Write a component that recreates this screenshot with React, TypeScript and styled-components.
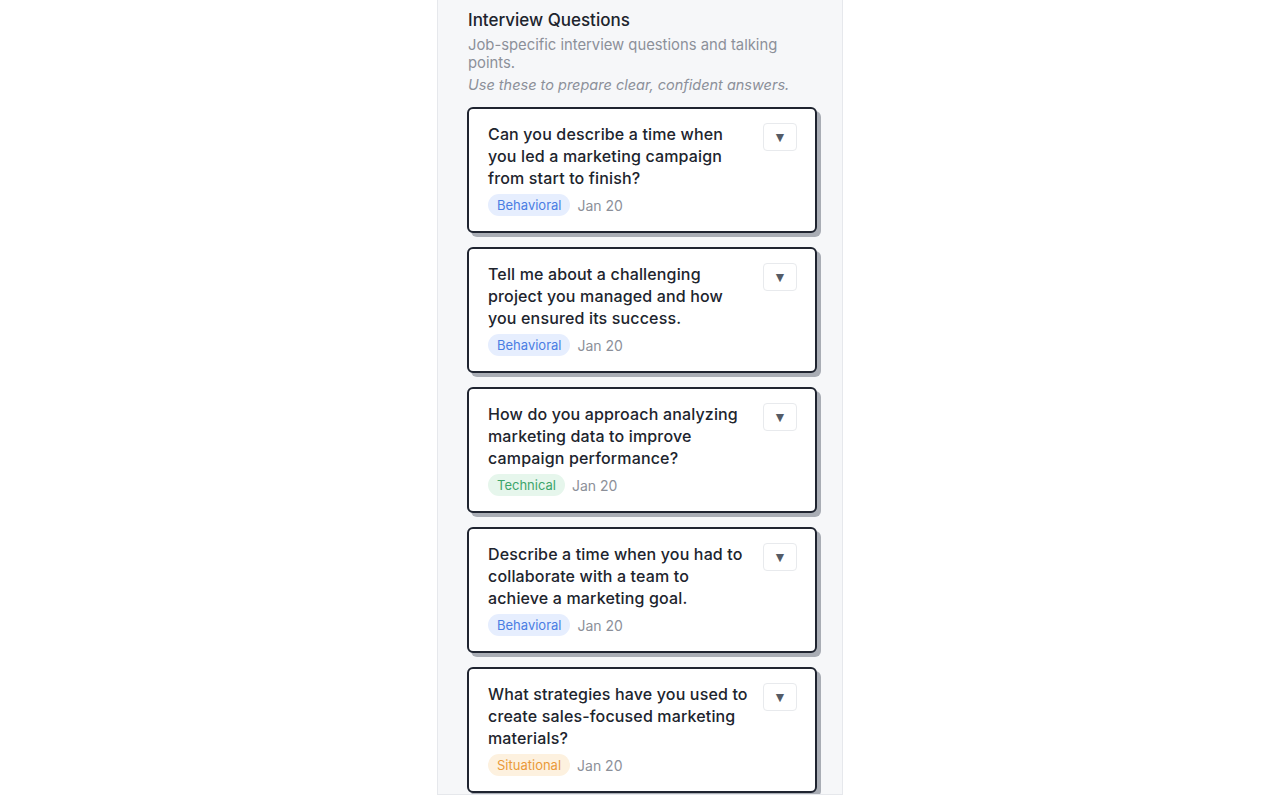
import React, { useState } from "react";
import styled, { createGlobalStyle, css } from "styled-components";

const GlobalStyle = createGlobalStyle`
  html, body {
    margin: 0;
    padding: 0;
    background: #ffffff;
  }
  body {
    font-family: Inter, "Noto Sans", sans-serif;
  }
`;

const Page = styled.div`
  display: flex;
  justify-content: center;
  height: 800px;
  overflow: hidden;
`;

const Panel = styled.section`
  width: 406px;
  height: 795px;
  box-sizing: border-box;
  background: #f6f7f9;
  border-left: 1px solid #e6e8ec;
  border-right: 1px solid #e6e8ec;
  border-bottom: 1px solid #e6e8ec;
  padding: 8px 25px 0 29px;
  overflow: hidden;
`;

const Title = styled.h2`
  margin: 0;
  padding-left: 1px;
  font-size: 17px;
  line-height: 24px;
  font-weight: 500;
  color: #20242d;
`;

const Subtitle = styled.p`
  margin: 4px 0 0;
  padding-left: 1px;
  font-size: 14.8px;
  line-height: 18px;
  color: #8c9099;
`;

const Hint = styled.p`
  margin: 4px 0 0;
  padding-left: 1px;
  font-size: 14.5px;
  line-height: 18px;
  font-style: italic;
  color: #8c9099;
`;

const List = styled.div`
  display: flex;
  flex-direction: column;
  gap: 14px;
  margin-top: 13px;
`;

const Card = styled.article`
  width: 350px;
  box-sizing: border-box;
  background: #ffffff;
  border: 2px solid #1f2430;
  border-radius: 6px;
  box-shadow: 4px 4px 0 #a9adb5;
  padding: 14px 18px 15px 19px;
  display: flex;
  align-items: flex-start;
  gap: 12px;
`;

const Body = styled.div`
  flex: 1;
  display: flex;
  flex-direction: column;
  gap: 5px;
`;

const Question = styled.h3`
  margin: 0;
  font-size: 16px;
  line-height: 22px;
  font-weight: 500;
  letter-spacing: 0.15px;
  color: #20242d;
`;

const Meta = styled.div`
  display: flex;
  align-items: center;
  gap: 7px;
`;

type Kind = "Behavioral" | "Technical" | "Situational";

const chipColors: Record<Kind, ReturnType<typeof css>> = {
  Behavioral: css`
    background: #e6eefe;
    color: #4a7de3;
  `,
  Technical: css`
    background: #e6f6ec;
    color: #3da56b;
  `,
  Situational: css`
    background: #fdf1df;
    color: #ea9a38;
  `,
};

const Chip = styled.span<{ $kind: Kind }>`
  font-size: 13px;
  line-height: 22px;
  padding: 0 9px;
  border-radius: 11px;
  ${(p) => chipColors[p.$kind]}
`;

const DateText = styled.span`
  font-size: 14px;
  color: #8c9099;
`;

const Toggle = styled.button`
  flex: none;
  width: 34px;
  height: 28px;
  border: 1px solid #e8eaed;
  border-radius: 4px;
  background: #ffffff;
  color: #555b66;
  font-size: 14px;
  padding: 0;
  display: flex;
  align-items: center;
  justify-content: center;
  cursor: pointer;
`;

const questions: { text: string; kind: Kind; date: string }[] = [
  {
    text: "Can you describe a time when you led a marketing campaign from start to finish?",
    kind: "Behavioral",
    date: "Jan 20",
  },
  {
    text: "Tell me about a challenging project you managed and how you ensured its success.",
    kind: "Behavioral",
    date: "Jan 20",
  },
  {
    text: "How do you approach analyzing marketing data to improve campaign performance?",
    kind: "Technical",
    date: "Jan 20",
  },
  {
    text: "Describe a time when you had to collaborate with a team to achieve a marketing goal.",
    kind: "Behavioral",
    date: "Jan 20",
  },
  {
    text: "What strategies have you used to create sales-focused marketing materials?",
    kind: "Situational",
    date: "Jan 20",
  },
];

const App: React.FC = () => {
  const [open, setOpen] = useState<number | null>(null);
  return (
    <Page>
      <GlobalStyle />
      <Panel>
        <Title>Interview Questions</Title>
        <Subtitle>Job-specific interview questions and talking points.</Subtitle>
        <Hint>Use these to prepare clear, confident answers.</Hint>
        <List>
          {questions.map((q, i) => (
            <Card key={i}>
              <Body>
                <Question>{q.text}</Question>
                <Meta>
                  <Chip $kind={q.kind}>{q.kind}</Chip>
                  <DateText>{q.date}</DateText>
                </Meta>
              </Body>
              <Toggle onClick={() => setOpen(open === i ? null : i)}>
                {open === i ? "▲" : "▼"}
              </Toggle>
            </Card>
          ))}
        </List>
      </Panel>
    </Page>
  );
};

export default App;
